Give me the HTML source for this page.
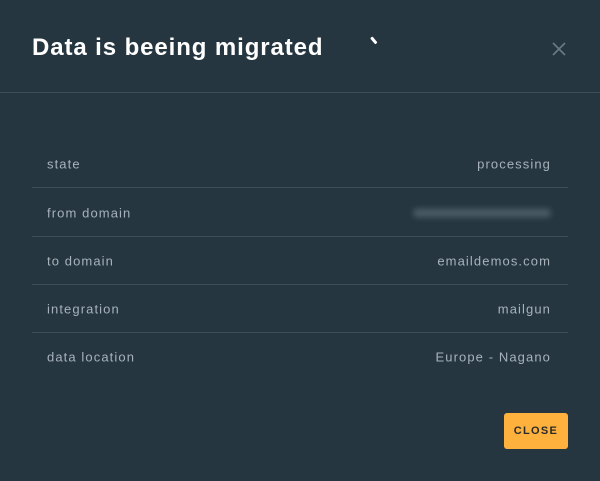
<!DOCTYPE html>
<html><head><style>
body{margin:0;width:600px;height:481px;background:#253640;font-family:"Liberation Sans",sans-serif;overflow:hidden;position:relative}
.t{position:absolute;left:32px;top:34px;font-size:24px;font-weight:bold;color:#fff;letter-spacing:0.9px}
.sp{position:absolute;left:370px;top:39px;width:8px;height:2.5px;background:#fff;transform:rotate(50deg);border-radius:1px}
.x{position:absolute;left:551px;top:41px}
.hr{position:absolute;left:0;top:92px;width:600px;height:1px;background:#3e4f59}
.row{position:absolute;left:32px;width:536px;height:48px;font-size:13px;color:#a7b2bb;letter-spacing:1.1px}
.row span{position:absolute;top:50%;transform:translateY(-50%)}
.row .l{left:15px}.row .r{right:17px}
.row.b{border-bottom:1px solid #3e4f59;box-sizing:border-box}
.blur{width:138px;height:9px;background:#4a5a64;filter:blur(3px);border-radius:4px}
.btn{position:absolute;left:504px;top:413px;width:64px;height:36px;background:#ffb13d;border-radius:3px;font-size:11px;font-weight:bold;color:#2a2a2a;letter-spacing:1.3px;text-align:center;line-height:36px}
</style></head><body>
<div class="t">Data is beeing migrated</div>
<div class="sp"></div>
<svg class="x" width="16" height="16" viewBox="0 0 16 16"><path d="M2 2L14 14M14 2L2 14" stroke="#6a7a84" stroke-width="1.6"/></svg>
<div class="hr"></div>
<div class="row b" style="top:140px"><span class="l">state</span><span class="r">processing</span></div>
<div class="row b" style="top:189px"><span class="l">from domain</span><span class="r blur"></span></div>
<div class="row b" style="top:237px"><span class="l">to domain</span><span class="r">emaildemos.com</span></div>
<div class="row b" style="top:285px"><span class="l">integration</span><span class="r">mailgun</span></div>
<div class="row" style="top:333px"><span class="l">data location</span><span class="r">Europe - Nagano</span></div>
<div class="btn">CLOSE</div>
</body></html>
